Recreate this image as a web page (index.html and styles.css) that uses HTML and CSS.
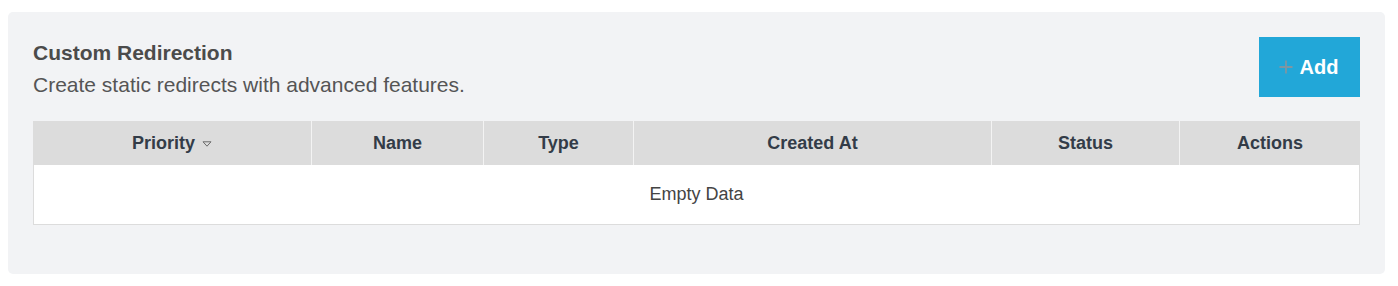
FILE: index.html
```html
<!DOCTYPE html>
<html lang="en">
<head>
<meta charset="utf-8">
<title>Custom Redirection</title>
<link rel="stylesheet" href="styles.css">
</head>
<body>
<section class="card">
  <div class="card-head">
    <div class="intro">
      <h2 class="title">Custom Redirection</h2>
      <p class="subtitle">Create static redirects with advanced features.</p>
    </div>
    <button class="add-btn" type="button"><svg class="plus" width="14" height="14" viewBox="0 0 14 14"><path d="M7 0.5V13.5M0.5 7H13.5" stroke="#7e96a2" stroke-width="1.8" fill="none"/></svg>Add</button>
  </div>
  <table class="grid">
    <colgroup>
      <col class="c1"><col class="c2"><col class="c3"><col class="c4"><col class="c5"><col class="c6">
    </colgroup>
    <thead>
      <tr>
        <th>Priority <svg class="sort" width="10" height="6" viewBox="0 0 10 6"><polygon points="1,0.8 9,0.8 5,5.2" fill="none" stroke="#6b6b6b" stroke-width="1"/></svg></th>
        <th>Name</th>
        <th>Type</th>
        <th>Created At</th>
        <th>Status</th>
        <th>Actions</th>
      </tr>
    </thead>
    <tbody>
      <tr><td class="empty" colspan="6">Empty Data</td></tr>
    </tbody>
  </table>
</section>
</body>
</html>
```
FILE: styles.css
```css
html, body {
  margin: 0;
  background: #ffffff;
}
body {
  padding: 12px 13px 12px 8px;
  font-family: "Liberation Sans", Arial, sans-serif;
}
.card {
  background: #f2f3f5;
  border-radius: 5px;
  padding: 25px 25px 49px 25px;
}
.card-head {
  display: flex;
  justify-content: space-between;
  align-items: flex-start;
  height: 60px;
}
.intro {
  padding-top: 3px;
}
.title {
  margin: 0;
  font-size: 21px;
  line-height: 25px;
  font-weight: 700;
  color: #4b4b4b;
}
.subtitle {
  margin: 7px 0 0;
  font-size: 21px;
  line-height: 25px;
  color: #555555;
}
.add-btn {
  width: 101px;
  height: 60px;
  border: none;
  background: #22a7d8;
  color: #ffffff;
  font-family: inherit;
  font-size: 20px;
  font-weight: 700;
  padding: 0 2px 0 0;
  display: flex;
  align-items: center;
  justify-content: center;
}
.plus {
  margin-right: 7px;
}
.grid {
  margin-top: 24px;
  width: 100%;
  table-layout: fixed;
  border-collapse: separate;
  border-spacing: 0;
}
.c1 { width: 278px; }
.c2 { width: 172px; }
.c3 { width: 150px; }
.c4 { width: 358px; }
.c5 { width: 188px; }
.c6 { width: 181px; }
.grid th {
  background: #dcdcdc;
  height: 44px;
  padding: 0;
  font-size: 18px;
  font-weight: 700;
  color: #333c48;
  text-align: center;
  border-left: 1px solid #f3f3f3;
}
.grid th:first-child {
  border-left: none;
}
.sort {
  vertical-align: 2px;
  margin-left: 2px;
}
.grid td.empty {
  background: #ffffff;
  height: 59px;
  padding: 0;
  text-align: center;
  font-size: 18px;
  color: #444444;
  border: 1px solid #dcdcdc;
  border-top: none;
}
```
